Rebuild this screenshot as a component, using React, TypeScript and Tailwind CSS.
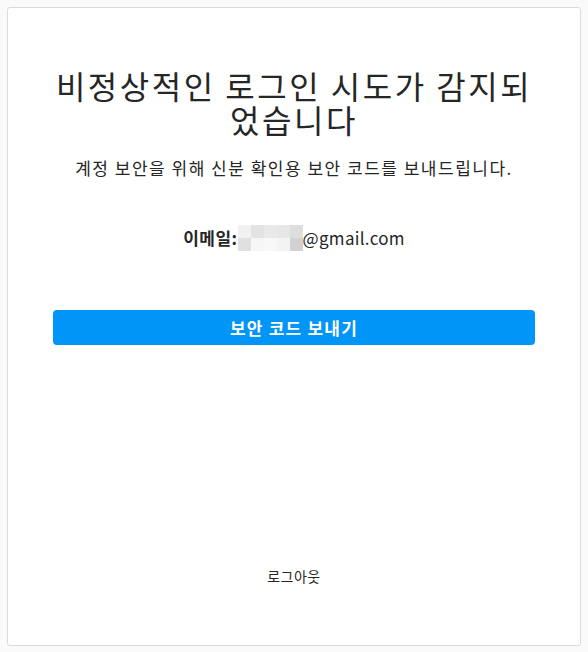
export default function App() {
  const cells = [
    "#f1f1f1", "#e3e3e3", "#e9e9e9", "#e7e7e7", "#dedede",
    "#e0e0e0", "#f6f6f6", "#f8f8f8", "#f3f3f3", "#d2d2d2",
  ];

  return (
    <div className="min-h-screen bg-[#fafafa] p-[7px] font-['Noto_Sans_CJK_KR','Noto_Sans',sans-serif] text-[#262626]">
      <div className="flex h-[639px] flex-col items-center rounded-[3px] border border-[#dbdbdb] bg-white px-[45px]">
        {/* Heading */}
        <h1 className="mt-[60px] text-center text-[32px] leading-[34px] font-normal tracking-[2.5px]">
          비정상적인 로그인 시도가 감지되었습니다
        </h1>
        <p className="mt-[20px] text-center text-[17px] leading-[24px] tracking-[1.5px]">
          계정 보안을 위해 신분 확인용 보안 코드를 보내드립니다.
        </p>

        {/* Email */}
        <div className="mt-[45px] flex items-center text-[17px] leading-[26px]">
          <span className="font-bold tracking-[0.5px]">이메일:</span>
          <span className="grid grid-cols-5 grid-rows-2">
            {cells.map((c, i) => (
              <span key={i} className="block h-[13px] w-[13px]" style={{ backgroundColor: c }} />
            ))}
          </span>
          <span className="tracking-[0.3px]">@gmail.com</span>
        </div>

        {/* Button */}
        <button className="mt-[59px] h-[35px] w-full rounded-[4px] bg-[#0095f6] text-[17px] font-bold tracking-[1.2px] text-white">
          보안 코드 보내기
        </button>

        <div className="flex-1" />

        <button className="mb-[60px] text-[14px] leading-[18px] tracking-[0.5px]">로그아웃</button>
      </div>
    </div>
  );
}
